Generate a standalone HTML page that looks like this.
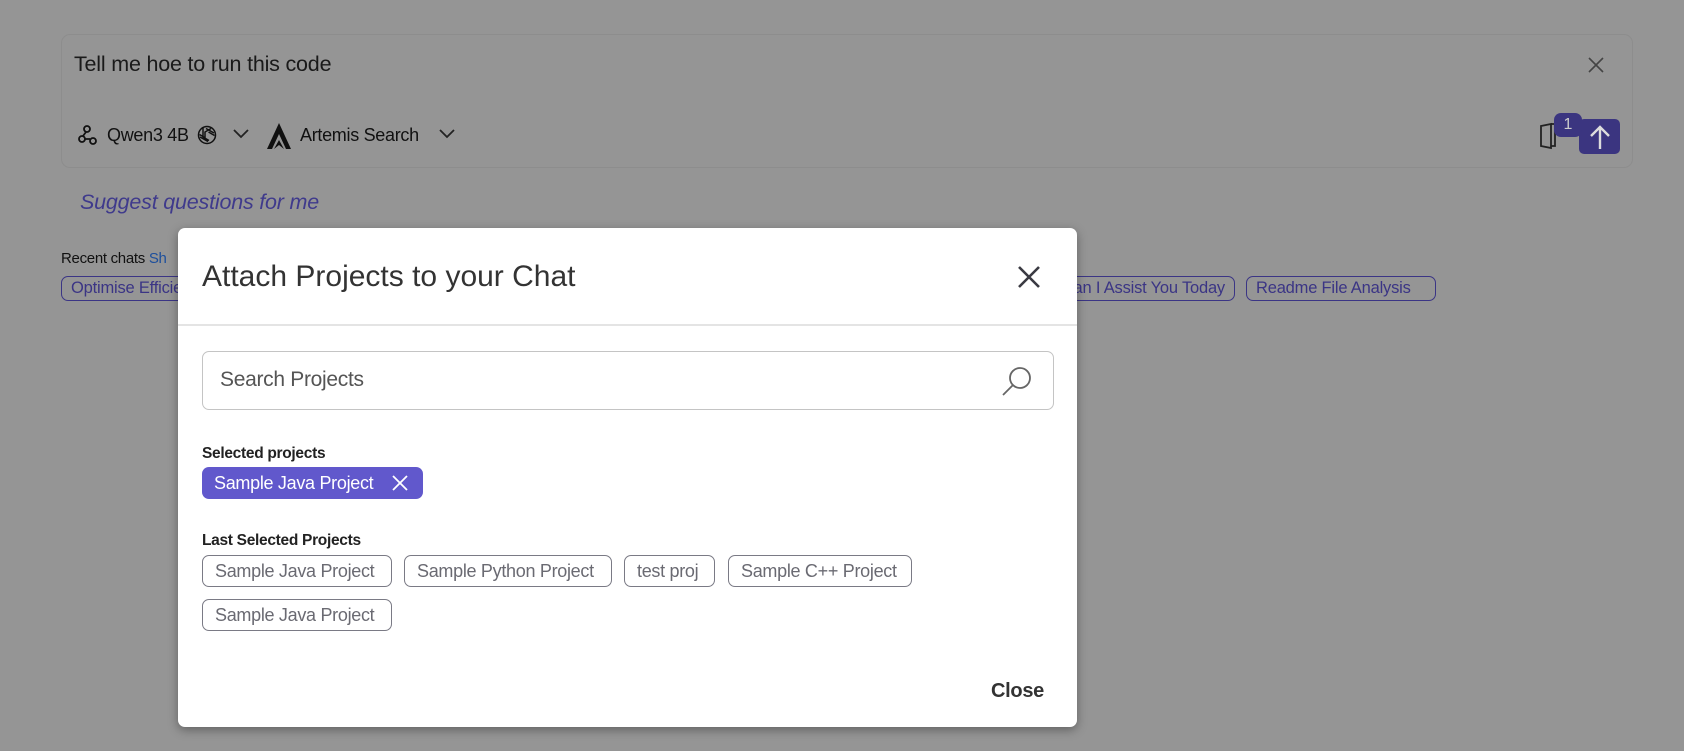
<!DOCTYPE html>
<html><head><meta charset="utf-8"><style>
*{box-sizing:border-box;margin:0;padding:0}
body{width:1684px;height:751px;background:#959595;font-family:"Liberation Sans",sans-serif;position:relative;overflow:hidden;color:#222}
.abs{position:absolute}
.inbox{left:61px;top:34px;width:1572px;height:134px;border:1px solid #8d8d8d;border-radius:9px}
.chip{position:absolute;height:25px;border:1px solid #3b3585;border-radius:7px;color:#3b3585;font-size:16.5px;line-height:23px;padding:0 9px;white-space:nowrap;letter-spacing:-0.2px;overflow:hidden}
.modal{left:178px;top:228px;width:899px;height:499px;background:#fff;border-radius:7px;box-shadow:0 3px 10px rgba(0,0,0,.35)}
.pchip{position:absolute;height:32px;border:1px solid #7a7a85;border-radius:7px;color:#6a6a72;font-size:18px;line-height:30px;padding:0 12px;white-space:nowrap;letter-spacing:-0.3px}
</style></head><body>
<div class="abs inbox"></div>
<div class="abs" style="left:74px;top:52px;font-size:21.5px;color:#1a1a1a;letter-spacing:-0.2px">Tell me hoe to run this code</div>
<svg class="abs" style="left:1586px;top:55px" width="20" height="20" viewBox="0 0 20 20"><path d="M3 3L17 17M17 3L3 17" stroke="#444" stroke-width="1.6"/></svg>
<svg class="abs" style="left:77px;top:124px" width="21" height="22" viewBox="0 0 21 22"><circle cx="10" cy="5" r="3" fill="none" stroke="#111" stroke-width="1.8"/><circle cx="5" cy="15" r="3" fill="none" stroke="#111" stroke-width="1.8"/><circle cx="16" cy="17" r="3" fill="none" stroke="#111" stroke-width="1.8"/><path d="M9 8L6 12M8 15H13" stroke="#111" stroke-width="1.8"/></svg>
<div class="abs" style="left:107px;top:125px;font-size:18px;color:#111;letter-spacing:-0.3px">Qwen3 4B</div>
<svg class="abs" style="left:196px;top:124px" width="22" height="22" viewBox="0 0 22 22" fill="none" stroke="#111" stroke-width="1.5"><circle cx="11" cy="11" r="8.5"/><path d="M7 4v9l6 3.5M15 4.5l-6 3.5v7M18 9l-8-4.5M4 13l8 4.5M18.5 11.5l-6-3.5M3.5 10.5l6 3.5"/></svg>
<svg class="abs" style="left:232px;top:128px" width="18" height="12" viewBox="0 0 18 12"><path d="M2 2L9 9L16 2" stroke="#222" stroke-width="1.8" fill="none"/></svg>
<svg class="abs" style="left:266px;top:122px" width="26" height="28" viewBox="0 0 26 28"><path d="M13 1L1 27H6L13 12L20 27H25Z" fill="#111"/><path d="M13 18L8 27L13 23L18 27Z" fill="#111"/></svg>
<div class="abs" style="left:300px;top:125px;font-size:18px;color:#111;letter-spacing:-0.3px">Artemis Search</div>
<svg class="abs" style="left:438px;top:128px" width="18" height="12" viewBox="0 0 18 12"><path d="M2 2L9 9L16 2" stroke="#222" stroke-width="1.8" fill="none"/></svg>
<svg class="abs" style="left:1539px;top:122px" width="20" height="28" viewBox="0 0 20 28"><path d="M2 4L12 2V26L2 24Z M12 2H16V24H12" fill="none" stroke="#222" stroke-width="1.8"/></svg>
<div class="abs" style="left:1579px;top:119px;width:41px;height:35px;background:#3b3580;border-radius:5px"></div>
<svg class="abs" style="left:1588px;top:123px" width="24" height="28" viewBox="0 0 24 28"><path d="M12 26V4M3 13L12 4L21 13" stroke="#ddd" stroke-width="2.4" fill="none"/></svg>
<div class="abs" style="left:1554px;top:113px;width:28px;height:24px;background:#3b3580;border-radius:7px;color:#ccc;font-size:16px;text-align:center;line-height:24px">1</div>
<div class="abs" style="left:80px;top:190px;font-size:21.5px;font-style:italic;color:#3f3a8c;letter-spacing:-0.2px">Suggest questions for me</div>
<div class="abs" style="left:61px;top:250px;font-size:15px;color:#111;letter-spacing:-0.3px">Recent chats <span style="color:#1d4f9c">Sh</span></div>
<div class="chip" style="left:61px;top:276px;width:150px">Optimise Efficiency</div>
<div class="chip" style="left:1040px;top:276px;width:195px;direction:rtl;text-align:left"><span style="direction:ltr;unicode-bidi:embed">How Can I Assist You Today</span></div>
<div class="chip" style="left:1246px;top:276px;width:190px">Readme File Analysis</div>
<div class="abs modal"></div>
<div class="abs" style="left:202px;top:260px;font-size:30px;color:#333;letter-spacing:0px">Attach Projects to your Chat</div>
<svg class="abs" style="left:1016px;top:264px" width="26" height="26" viewBox="0 0 26 26"><path d="M3 3L23 23M23 3L3 23" stroke="#3a3a42" stroke-width="2.6"/></svg>
<div class="abs" style="left:178px;top:324px;width:899px;height:2px;background:#e4e4e4"></div>
<div class="abs" style="left:202px;top:351px;width:852px;height:59px;border:1px solid #c4c4c4;border-radius:7px"></div>
<div class="abs" style="left:220px;top:368px;font-size:21px;color:#555;letter-spacing:-0.3px">Search Projects</div>
<svg class="abs" style="left:1000px;top:365px" width="34" height="32" viewBox="0 0 34 32"><circle cx="20" cy="13" r="10" fill="none" stroke="#666" stroke-width="1.8"/><path d="M13 20L3 30" stroke="#666" stroke-width="1.8"/></svg>
<div class="abs" style="left:202px;top:445px;font-size:15.5px;font-weight:bold;color:#222;letter-spacing:-0.3px">Selected projects</div>
<div class="abs" style="left:202px;top:467px;width:221px;height:32px;background:#6158cc;border-radius:7px"></div>
<div class="abs" style="left:214px;top:473px;font-size:18px;color:#fff;letter-spacing:-0.3px">Sample Java Project</div>
<svg class="abs" style="left:391px;top:474px" width="18" height="18" viewBox="0 0 18 18"><path d="M2 2L16 16M16 2L2 16" stroke="#fff" stroke-width="1.8"/></svg>
<div class="abs" style="left:202px;top:532px;font-size:15.5px;font-weight:bold;color:#222;letter-spacing:-0.3px">Last Selected Projects</div>
<div class="pchip" style="left:202px;top:555px;width:190px">Sample Java Project</div>
<div class="pchip" style="left:404px;top:555px;width:208px">Sample Python Project</div>
<div class="pchip" style="left:624px;top:555px;width:91px">test proj</div>
<div class="pchip" style="left:728px;top:555px;width:184px">Sample C++ Project</div>
<div class="pchip" style="left:202px;top:599px;width:190px">Sample Java Project</div>
<div class="abs" style="left:991px;top:680px;font-size:20px;font-weight:bold;color:#333;letter-spacing:-0.3px">Close</div>
</body></html>
